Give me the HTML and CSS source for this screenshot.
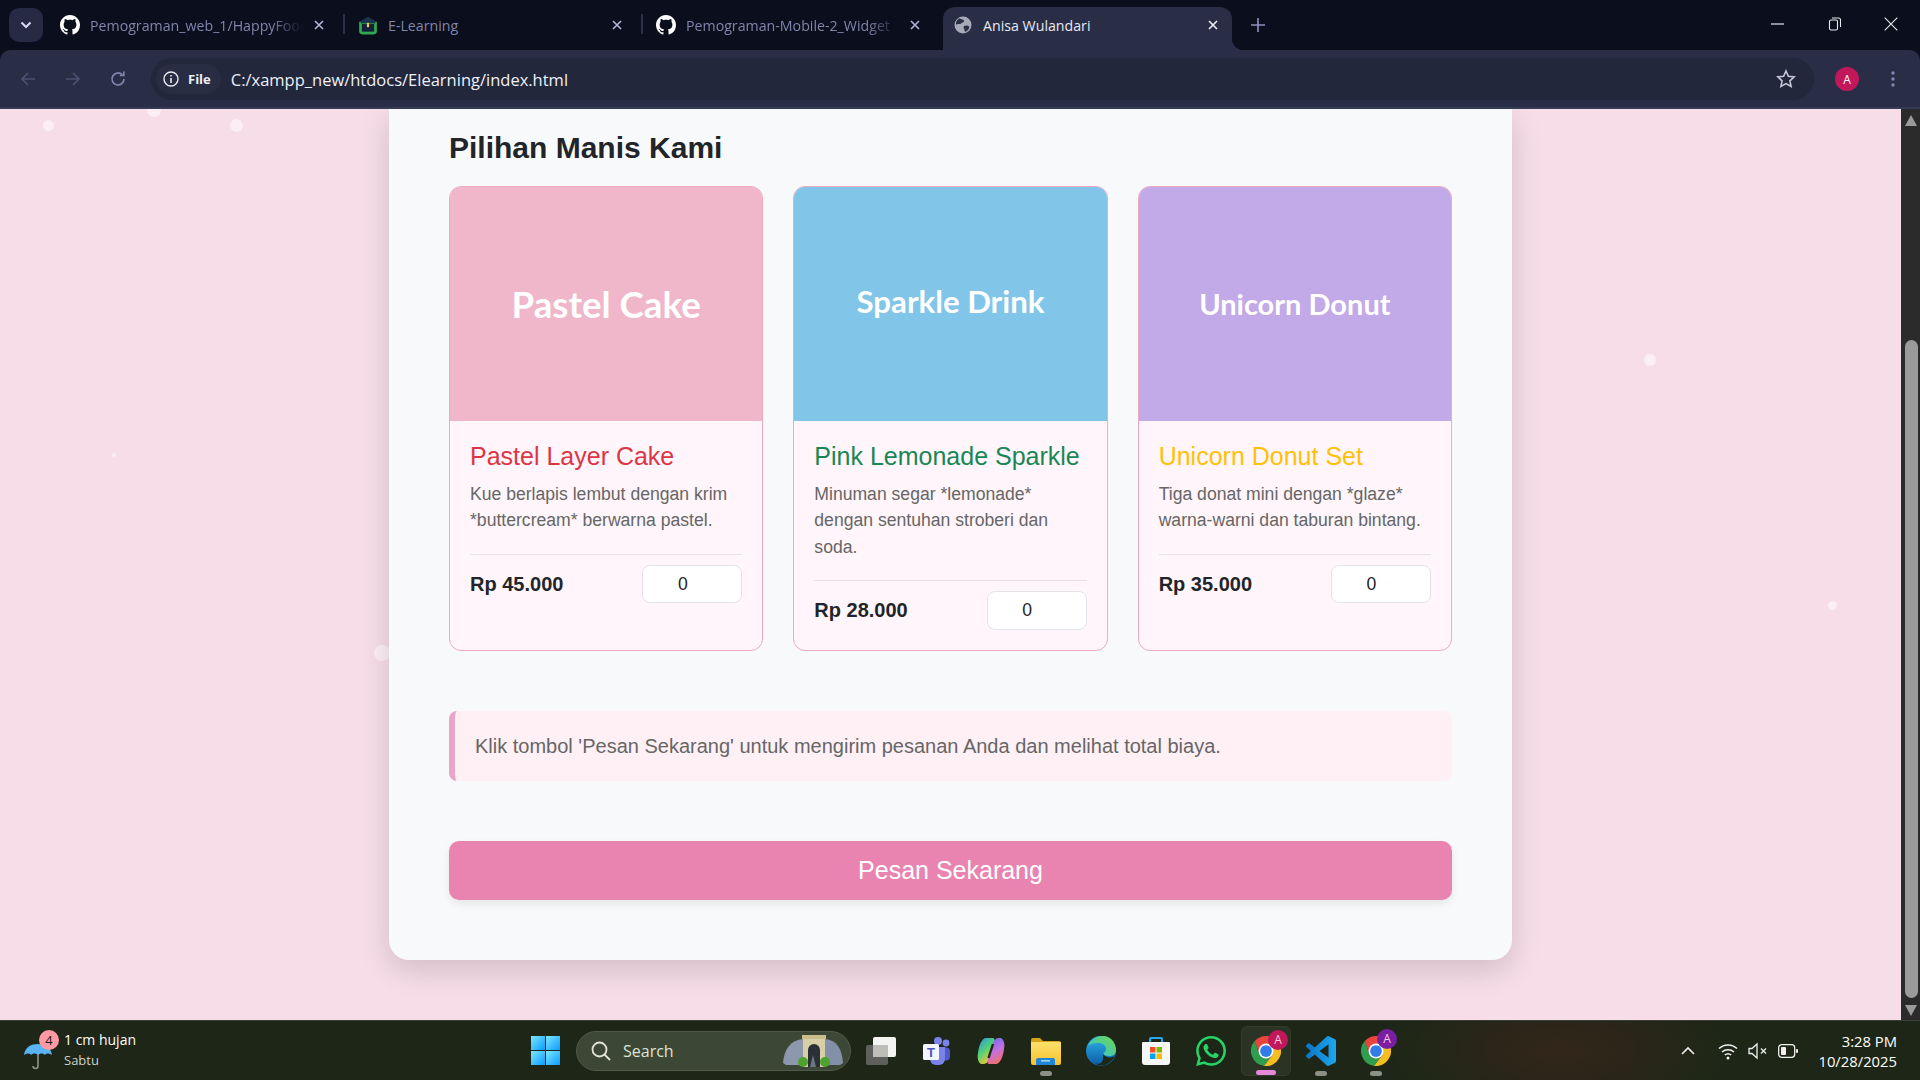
FILE: index.html
```html
<!DOCTYPE html>
<html lang="id">
<head>
<meta charset="utf-8">
<title>Anisa Wulandari</title>
<link rel="stylesheet" href="styles.css">
</head>
<body>
<svg class="defs" width="0" height="0" aria-hidden="true">
  <defs>
    <symbol id="gh" viewBox="0 0 16 16"><path fill="currentColor" d="M8 0C3.58 0 0 3.58 0 8c0 3.54 2.29 6.53 5.47 7.59.4.07.55-.17.55-.38 0-.19-.01-.82-.01-1.49-2.01.37-2.53-.49-2.69-.94-.09-.23-.48-.94-.82-1.13-.28-.15-.68-.52-.01-.53.63-.01 1.08.58 1.23.82.72 1.21 1.87.87 2.33.66.07-.52.28-.87.51-1.07-1.78-.2-3.64-.89-3.64-3.95 0-.87.31-1.59.82-2.15-.08-.2-.36-1.02.08-2.12 0 0 .67-.21 2.2.82.64-.18 1.32-.27 2-.27.68 0 1.36.09 2 .27 1.53-1.04 2.2-.82 2.2-.82.44 1.1.16 1.92.08 2.12.51.56.82 1.27.82 2.15 0 3.07-1.87 3.75-3.65 3.95.29.25.54.73.54 1.48 0 1.07-.01 1.93-.01 2.2 0 .21.15.46.55.38A8.013 8.013 0 0016 8c0-4.42-3.58-8-8-8z"/></symbol>
    <symbol id="x" viewBox="0 0 12 12"><path d="M2 2l8 8M10 2l-8 8" stroke="currentColor" stroke-width="1.6" fill="none"/></symbol>
    <symbol id="chrome" viewBox="0 0 24 24">
      <path fill="#e8453c" d="M12 6h10.39A12 12 0 0 0 3 4.06L6.8 15Z"/>
      <path fill="#2f9e4f" d="M6.8 15 3 4.06A12 12 0 0 0 10.4 23.9L17.2 15Z"/>
      <path fill="#f5bd1f" d="M17.2 15 10.4 23.9A12 12 0 0 0 22.39 6H12Z"/>
      <circle cx="12" cy="12" r="6" fill="#fff"/><circle cx="12" cy="12" r="4.7" fill="#2f7de8"/>
    </symbol>
    <linearGradient id="win" x1="0" y1="0" x2="1" y2="1"><stop offset="0" stop-color="#7ce8ff"/><stop offset="1" stop-color="#0a9bff"/></linearGradient>
    <linearGradient id="edgeA" x1="0" y1="0" x2="0" y2="1"><stop offset="0" stop-color="#2bb4e8"/><stop offset="1" stop-color="#0c5aa6"/></linearGradient>
    <linearGradient id="edgeB" x1="0" y1="1" x2="1" y2="0"><stop offset="0" stop-color="#34bfe0"/><stop offset="1" stop-color="#6fd84f"/></linearGradient>
    <linearGradient id="copA" x1="0" y1="0" x2="0.6" y2="1"><stop offset="0" stop-color="#2f8df0"/><stop offset=".5" stop-color="#4fd07a"/><stop offset="1" stop-color="#f7c92c"/></linearGradient>
    <linearGradient id="copB" x1="0.3" y1="0" x2="0.7" y2="1"><stop offset="0" stop-color="#6a6ef0"/><stop offset=".5" stop-color="#c66fe0"/><stop offset="1" stop-color="#f6705a"/></linearGradient>
    <linearGradient id="folder" x1="0" y1="0" x2="0" y2="1"><stop offset="0" stop-color="#ffe26b"/><stop offset="1" stop-color="#f5c12e"/></linearGradient>
    <linearGradient id="vs" x1="0" y1="0" x2="1" y2="0"><stop offset="0" stop-color="#0a76c4"/><stop offset="1" stop-color="#1ea6f0"/></linearGradient>
  </defs>
</svg>

<header class="tabstrip">
  <button class="tab-search"><svg width="12" height="8" viewBox="0 0 12 8"><path d="M1.5 1.5 6 6l4.5-4.5" stroke="#d8daf0" stroke-width="2" fill="none"/></svg></button>
  <div class="tab">
    <svg class="favicon fav-white"><use href="#gh"/></svg>
    <span class="tab-title fading">Pemograman_web_1/HappyFood</span>
    <svg class="tab-close"><use href="#x"/></svg>
  </div>
  <i class="tab-sep"></i>
  <div class="tab">
    <svg class="favicon" viewBox="1 1 18 18"><path d="M2 7h16v8.500a3 3 0 0 1-3 3H5a3 3 0 0 1-3-3Z" fill="#2fa84f"/><rect x="4.500" y="9" width="11" height="7" fill="#14213a"/><path d="M3.500 6.500 10 2.500l6.500 4v2h-13Z" fill="#1c3350"/><rect x="9" y="8" width="2" height="4" fill="#e8c64a"/></svg>
    <span class="tab-title">E-Learning</span>
    <svg class="tab-close"><use href="#x"/></svg>
  </div>
  <i class="tab-sep"></i>
  <div class="tab">
    <svg class="favicon fav-white"><use href="#gh"/></svg>
    <span class="tab-title fading">Pemograman-Mobile-2_Widget</span>
    <svg class="tab-close"><use href="#x"/></svg>
  </div>
  <div class="tab tab-active">
    <svg class="favicon" viewBox="0 0 20 20"><circle cx="10" cy="10" r="8.5" fill="#a6a9b8"/><path d="M6 3.500c2 .5 4 .5 5 2s-2 2-3 3-3 0-4 1-2-3 2-6ZM11 11c2-1 4-.5 5 .5s-1 4-3 5-1-2-2-3 0-2 0-2.500Z" fill="#2a2e45"/></svg>
    <span class="tab-title">Anisa Wulandari</span>
    <svg class="tab-close"><use href="#x"/></svg>
  </div>
  <svg class="new-tab" width="14" height="14" viewBox="0 0 14 14"><path d="M7 0v14M0 7h14" stroke="#8d93bd" stroke-width="1.6"/></svg>
  <div class="win-controls">
    <svg width="14" height="14" viewBox="0 0 14 14"><path d="M0 7h13" stroke="#e8e8ee" stroke-width="1.2"/></svg>
    <svg width="14" height="14" viewBox="0 0 14 14"><rect x="1.500" y="3" width="8" height="10" rx="1.500" stroke="#e8e8ee" stroke-width="1.1" fill="none"/><path d="M4 1h6.500a2 2 0 0 1 2 2v7" stroke="#e8e8ee" stroke-width="1.1" fill="none"/></svg>
    <svg width="14" height="14" viewBox="0 0 14 14"><path d="M.7.7l12.600 12.600M13.300.7.7 13.300" stroke="#e8e8ee" stroke-width="1.1"/></svg>
  </div>
</header>

<nav class="toolbar">
  <div class="nav-btns">
    <svg width="18" height="18" viewBox="0 0 18 18"><path d="M16 9H3M9 3 3 9l6 6" stroke="#4c5272" stroke-width="1.6" fill="none"/></svg>
    <svg width="18" height="18" viewBox="0 0 18 18"><path d="M2 9h13M9 3l6 6-6 6" stroke="#4c5272" stroke-width="1.6" fill="none"/></svg>
    <svg width="18" height="18" viewBox="0 0 18 18"><path d="M15 9a6 6 0 1 1-1.800-4.300M14.800 1.500v4h-4" stroke="#7f86ad" stroke-width="1.7" fill="none"/></svg>
  </div>
  <div class="omnibox">
    <div class="chip">
      <svg width="16" height="16" viewBox="0 0 16 16"><circle cx="8" cy="8" r="7" stroke="#e8e9f2" stroke-width="1.4" fill="none"/><path d="M8 7v5M8 4v1.600" stroke="#e8e9f2" stroke-width="1.6"/></svg>
      <span>File</span>
    </div>
    <span class="url">C:/xampp_new/htdocs/Elearning/index.html</span>
    <svg class="star" width="20" height="20" viewBox="0 0 20 20"><path d="M10 2l2.400 5.300 5.800.6-4.300 3.900 1.200 5.700L10 14.600l-5.100 2.900 1.200-5.700L1.800 7.900l5.800-.6Z" stroke="#c4c7d6" stroke-width="1.6" fill="none"/></svg>
  </div>
  <span class="avatar">A</span>
  <svg class="menu" width="4" height="18" viewBox="0 0 4 18"><circle cx="2" cy="3" r="1.7" fill="#8087b0"/><circle cx="2" cy="9" r="1.7" fill="#8087b0"/><circle cx="2" cy="15" r="1.7" fill="#8087b0"/></svg>
</nav>

<div class="browser-body">
  <div class="viewport">
    <i class="dot d1"></i><i class="dot d2"></i><i class="dot d3"></i><i class="dot d4"></i><i class="dot d5"></i><i class="dot d6"></i><i class="dot d7"></i>
    <main class="sheet">
      <h2 class="section-title">Pilihan Manis Kami</h2>
      <section class="products">
        <article class="product">
          <div class="thumb thumb-pink">Pastel Cake</div>
          <div class="product-body">
            <h3 class="name name-red">Pastel Layer Cake</h3>
            <p class="desc">Kue berlapis lembut dengan krim *buttercream* berwarna pastel.</p>
            <div class="buy"><strong class="price">Rp 45.000</strong><input class="qty" type="number" value="0"></div>
          </div>
        </article>
        <article class="product">
          <div class="thumb thumb-blue">Sparkle Drink</div>
          <div class="product-body">
            <h3 class="name name-green">Pink Lemonade Sparkle</h3>
            <p class="desc">Minuman segar *lemonade* dengan sentuhan stroberi dan soda.</p>
            <div class="buy"><strong class="price">Rp 28.000</strong><input class="qty" type="number" value="0"></div>
          </div>
        </article>
        <article class="product">
          <div class="thumb thumb-purple">Unicorn Donut</div>
          <div class="product-body">
            <h3 class="name name-yellow">Unicorn Donut Set</h3>
            <p class="desc">Tiga donat mini dengan *glaze* warna-warni dan taburan bintang.</p>
            <div class="buy"><strong class="price">Rp 35.000</strong><input class="qty" type="number" value="0"></div>
          </div>
        </article>
      </section>
      <p class="note">Klik tombol 'Pesan Sekarang' untuk mengirim pesanan Anda dan melihat total biaya.</p>
      <button class="order">Pesan Sekarang</button>
    </main>
  </div>
  <aside class="scrollbar">
    <i class="arrow arrow-up"></i>
    <div class="scroll-track"><div class="scroll-thumb"></div></div>
    <i class="arrow arrow-down"></i>
  </aside>
</div>

<footer class="taskbar">
  <div class="weather">
    <svg class="umbrella" width="30" height="34" viewBox="0 0 30 34"><path d="M15 13v15a2.500 2.500 0 0 1-5 0" stroke="#8f9488" stroke-width="1.6" fill="none"/><path d="M1 17C2 9 8 6 15 6s13 3 14 11c-3-2-6-2-7 0-2-2-5-2-7 0-2-2-5-2-7 0-1-2-4-2-7 0Z" fill="#58b4f2"/></svg>
    <span class="badge">4</span>
    <div class="weather-text"><span class="w-main">1 cm hujan</span><span class="w-sub">Sabtu</span></div>
  </div>
  <div class="tb-btn">
    <svg width="29" height="29" viewBox="0 0 29 29"><rect width="14" height="14" fill="url(#win)"/><rect x="15" width="14" height="14" fill="url(#win)"/><rect y="15" width="14" height="14" fill="url(#win)"/><rect x="15" y="15" width="14" height="14" fill="url(#win)"/></svg>
  </div>
  <div class="searchbox">
    <svg width="20" height="20" viewBox="0 0 20 20"><circle cx="8.500" cy="8.500" r="7" stroke="#e2e4da" stroke-width="1.8" fill="none"/><path d="M13.500 13.500 19 19" stroke="#e2e4da" stroke-width="1.8"/></svg>
    <span>Search</span>
    <svg class="search-art" width="60" height="32" viewBox="0 0 60 32"><path d="M0 28C1 14 8 5 20 4l4 26H3Z" fill="#8d97ad"/><path d="M60 28C59 14 54 5 42 4l-5 26h20Z" fill="#8490a8"/><rect x="20" y="0" width="22" height="32" fill="#d8cfa6"/><rect x="19" y="0" width="24" height="4" fill="#c9bd8c"/><path d="M25 32V15a6 6 0 0 1 12 0v17Z" fill="#2b3036"/><path d="M27 32l3-12 3 12Z" fill="#6d7485"/><circle cx="20" cy="27" r="5" fill="#4ea32e"/><circle cx="42" cy="27" r="5" fill="#4ea32e"/></svg>
  </div>
  <div class="tb-btn">
    <svg width="30" height="28" viewBox="0 0 30 28"><rect y="8" width="22" height="20" rx="2" fill="#5f5f5c"/><rect x="7" width="23" height="20" rx="2" fill="#f4f4f2"/><rect x="7" y="8" width="15" height="12" fill="#bdbdb9"/></svg>
  </div>
  <div class="tb-btn">
    <svg width="30" height="30" viewBox="0 0 30 30"><circle cx="25" cy="7" r="3.400" fill="#7b83eb"/><circle cx="17" cy="5" r="4" fill="#7b83eb"/><rect x="20" y="11.500" width="9" height="13" rx="4" fill="#5059c9"/><path d="M9 11h15v12a6 6 0 0 1-6 6h-3a6 6 0 0 1-6-6Z" fill="#7b83eb"/><rect x="2" y="8" width="16" height="16" rx="1.500" fill="#f3f5ff"/><text class="teams-t" x="10" y="21" text-anchor="middle">T</text></svg>
  </div>
  <div class="tb-btn">
    <svg width="30" height="30" viewBox="0 0 30 30"><path d="M10 2h6c3 0 3 2 2 5l-5 16c-1 3-3 5-6 5H5c-3-2-4-6-3-11C3 9 6 2 10 2Z" fill="url(#copA)"/><path d="M20 28h-6c-3 0-3-2-2-5l5-16c1-3 3-5 6-5h2c3 2 4 6 3 11-1 8-4 15-8 15Z" fill="url(#copB)"/><path d="M12.500 22 17 8" stroke="#1f2817" stroke-width="2.400"/></svg>
  </div>
  <div class="tb-btn has-dot">
    <svg width="30" height="28" viewBox="0 0 30 28"><path d="M0 3a2 2 0 0 1 2-2h7l3 3h16a2 2 0 0 1 2 2v3H0Z" fill="#d9a21b"/><path d="M0 5h30v21a2 2 0 0 1-2 2H2a2 2 0 0 1-2-2Z" fill="url(#folder)"/><path d="M5 28v-5a2 2 0 0 1 2-2h15a2 2 0 0 1 2 2v5Z" fill="#1f86d6"/><rect x="10" y="23" width="9" height="1.600" fill="#9ad4f7"/></svg>
  </div>
  <div class="tb-btn">
    <svg width="30" height="30" viewBox="0 0 30 30"><circle cx="15" cy="15" r="15" fill="url(#edgeA)"/><path d="M2 10C5 3 12 0 17 0c7 0 13 6 13 14 0 4-3 6-7 6-3 0-6-1-6-3 2-1 3-2 3-4 0-4-4-6-8-6-4 0-8 1-10 3Z" fill="url(#edgeB)"/><path d="M17 17c0 2 3 4.500 7 4.500 2 0 4-1 5-2.500-2 6-8 10.500-14 10.500-2 0-4-1-5-2 4 1 7-1 7-5Z" fill="#1f2817"/></svg>
  </div>
  <div class="tb-btn">
    <svg width="30" height="30" viewBox="0 0 30 30"><path d="M9 7V3a1 1 0 0 1 1-1h10a1 1 0 0 1 1 1v4" stroke="#25a9f0" stroke-width="2" fill="none"/><path d="M1 7a1 1 0 0 1 1-1h26a1 1 0 0 1 1 1v19a3 3 0 0 1-3 3H4a3 3 0 0 1-3-3Z" fill="#f7f7f7"/><rect x="9" y="11" width="5.500" height="5.500" fill="#f25022"/><rect x="15.500" y="11" width="5.500" height="5.500" fill="#7fba00"/><rect x="9" y="17.500" width="5.500" height="5.500" fill="#00a4ef"/><rect x="15.500" y="17.500" width="5.500" height="5.500" fill="#ffb900"/></svg>
  </div>
  <div class="tb-btn">
    <svg width="30" height="30" viewBox="0 0 24 24"><path fill="#25d366" d="M17.472 14.382c-.297-.149-1.758-.867-2.03-.967-.273-.099-.471-.148-.67.15-.197.297-.767.966-.94 1.164-.173.199-.347.223-.644.075-.297-.15-1.255-.463-2.39-1.475-.883-.788-1.48-1.761-1.653-2.059-.173-.297-.018-.458.13-.606.134-.133.298-.347.446-.52.149-.174.198-.298.298-.497.099-.198.05-.371-.025-.52-.075-.149-.669-1.612-.916-2.207-.242-.579-.487-.5-.669-.51-.173-.008-.371-.01-.57-.01-.198 0-.52.074-.792.372-.272.297-1.04 1.016-1.04 2.479 0 1.462 1.065 2.875 1.213 3.074.149.198 2.096 3.2 5.077 4.487.709.306 1.262.489 1.694.625.712.227 1.36.195 1.871.118.571-.085 1.758-.719 2.006-1.413.248-.694.248-1.289.173-1.413-.074-.124-.272-.198-.57-.347m-5.421 7.403h-.004a9.87 9.87 0 01-5.031-1.378l-.361-.214-3.741.982.998-3.648-.235-.374a9.86 9.86 0 01-1.51-5.26c.001-5.45 4.436-9.884 9.888-9.884 2.64 0 5.122 1.03 6.988 2.898a9.825 9.825 0 012.893 6.994c-.003 5.45-4.437 9.884-9.885 9.884m8.413-18.297A11.815 11.815 0 0012.05 0C5.495 0 .16 5.335.157 11.892c0 2.096.547 4.142 1.588 5.945L.057 24l6.305-1.654a11.882 11.882 0 005.683 1.448h.005c6.554 0 11.89-5.335 11.893-11.893a11.821 11.821 0 00-3.48-8.413Z"/></svg>
  </div>
  <div class="tb-btn tb-active">
    <svg class="tb-chrome" width="30" height="30"><use href="#chrome"/></svg>
    <span class="profile-badge pb-red">A</span>
  </div>
  <div class="tb-btn has-dot">
    <svg width="30" height="30" viewBox="0 0 24 24"><path fill="url(#vs)" d="M23.15 2.587L18.21.21a1.494 1.494 0 0 0-1.705.29l-9.46 8.63-4.12-3.128a.999.999 0 0 0-1.276.057L.327 7.261A1 1 0 0 0 .326 8.74L3.899 12 .326 15.26a1 1 0 0 0 .001 1.479L1.65 17.94a.999.999 0 0 0 1.276.057l4.12-3.128 9.46 8.63a1.492 1.492 0 0 0 1.704.29l4.942-2.377A1.5 1.5 0 0 0 24 20.06V3.939a1.5 1.5 0 0 0-.85-1.352zm-5.146 14.861L10.826 12l7.178-5.448v10.896z"/></svg>
  </div>
  <div class="tb-btn has-dot">
    <svg class="tb-chrome" width="30" height="30"><use href="#chrome"/></svg>
    <span class="profile-badge pb-purple">A</span>
  </div>
  <div class="tray">
    <svg width="14" height="9" viewBox="0 0 14 9"><path d="M1 8l6-6 6 6" stroke="#f0f0f0" stroke-width="1.600" fill="none"/></svg>
    <svg class="wifi" width="20" height="18" viewBox="0 0 20 18"><path d="M1 6.500a13 13 0 0 1 18 0M4 10a9 9 0 0 1 12 0M6.800 13a5 5 0 0 1 6.400 0" stroke="#f0f0f0" stroke-width="1.500" fill="none"/><circle cx="10" cy="16" r="1.500" fill="#f0f0f0"/></svg>
    <svg class="speaker" width="20" height="18" viewBox="0 0 20 18"><path d="M1 6.500h3L9 2v14l-5-4.500H1Z" stroke="#f0f0f0" stroke-width="1.300" fill="none"/><path d="M13 6.500l5 5M18 6.500l-5 5" stroke="#f0f0f0" stroke-width="1.300"/></svg>
    <svg class="battery" width="20" height="14" viewBox="0 0 20 14"><rect x=".7" y=".7" width="16" height="12.600" rx="3" stroke="#f0f0f0" stroke-width="1.300" fill="none"/><rect x="3" y="3" width="5" height="8" rx="1" fill="#f0f0f0"/><rect x="18" y="5" width="2" height="4" rx="1" fill="#f0f0f0"/></svg>
    <div class="clock"><span>3:28 PM</span><span>10/28/2025</span></div>
  </div>
</footer>
</body>
</html>
```
FILE: styles.css
```css
* { box-sizing: border-box; }
html, body { margin: 0; height: 100%; }
body {
  display: flex;
  flex-direction: column;
  height: 100vh;
  overflow: hidden;
  font-family: "Liberation Sans", Arial, sans-serif;
  background: #0b0e1c;
}
.defs { position: absolute; }

/* tab strip */
.tabstrip {
  flex: 0 0 50px;
  display: flex;
  align-items: flex-end;
  padding-left: 9px;
  background: #0b0e1c;
  font-family: "Open Sans", "Noto Sans", sans-serif;
  font-size: 14.2px;
}
.tab-search {
  align-self: flex-start;
  width: 34px;
  height: 34px;
  margin: 8px 4px 0 0;
  padding: 0;
  border: 0;
  border-radius: 10px;
  background: #262a42;
  display: flex;
  align-items: center;
  justify-content: center;
}
.tab {
  width: 296px;
  height: 43px;
  display: flex;
  align-items: center;
  padding: 0 17px 7px 13px;
  color: #7f85ab;
}
.favicon { width: 20px; height: 20px; flex: none; margin-right: 10px; }
.fav-white { color: #fff; }
.tab-title { flex: 1; overflow: hidden; white-space: nowrap; }
.fading {
  -webkit-mask-image: linear-gradient(to right, #000 85%, transparent 100%);
  mask-image: linear-gradient(to right, #000 85%, transparent 100%);
}
.tab-close { width: 12px; height: 12px; flex: none; margin-left: 10px; margin-right: 1px; color: #b3b7d6; }
.tab-sep { width: 2px; height: 20px; margin-bottom: 16px; background: #2b2f47; flex: none; }
.tab-active {
  position: relative;
  width: 289px;
  margin-left: 4px;
  padding-left: 10px;
  padding-right: 12px;
  background: #292e46;
  border-radius: 12px 12px 0 0;
  color: #e6e8f2;
}
.tab-active .tab-close { color: #f0f1f8; }
.tab-active::after {
  content: "";
  position: absolute;
  right: -12px;
  bottom: 0;
  width: 12px;
  height: 12px;
  background: radial-gradient(circle at 100% 0, transparent 12px, #292e46 12.5px);
}
.new-tab { align-self: center; margin-left: 19px; }
.win-controls {
  margin-left: auto;
  align-self: flex-start;
  display: flex;
  gap: 42.5px;
  padding: 17px 22px 0 0;
}

/* toolbar */
.toolbar {
  flex: 0 0 59px;
  display: flex;
  align-items: center;
  padding: 8px 18px 7px 19px;
  background: #292e46;
  border-bottom: 2px solid #343a58;
  border-radius: 10px 10px 0 0;
  font-family: "Open Sans", "Noto Sans", sans-serif;
}
.nav-btns { display: flex; gap: 27px; width: 132px; flex: none; }
.omnibox {
  flex: 0 0 1663px;
  height: 42px;
  display: flex;
  align-items: center;
  padding: 0 18px 0 5px;
  background: #22273b;
  border-radius: 21px;
}
.chip {
  display: flex;
  align-items: center;
  gap: 9px;
  height: 30px;
  padding: 0 10px 0 7px;
  border-radius: 15px;
  background: #282d43;
  color: #eceef6;
  font-size: 13px;
  font-weight: 700;
}
.url { margin-left: 10px; color: #eef0f8; font-size: 16.5px; }
.star { margin-left: auto; }
.avatar {
  width: 24px;
  height: 24px;
  margin-left: 21px;
  border-radius: 50%;
  background: #c2185b;
  color: #fff;
  font-size: 12px;
  display: flex;
  align-items: center;
  justify-content: center;
  flex: none;
}
.menu { margin-left: 32px; flex: none; }

/* browser body */
.browser-body { flex: 1; display: flex; min-height: 0; }
.viewport {
  position: relative;
  flex: 1;
  display: flex;
  justify-content: center;
  align-items: flex-start;
  overflow: hidden;
  background: #f6dde8;
}
.dot { position: absolute; border-radius: 50%; background: rgba(255, 255, 255, .5); }
.d1 { left: 43px; top: 11px; width: 11px; height: 11px; }
.d2 { left: 230px; top: 10px; width: 13px; height: 13px; }
.d3 { left: 147px; top: -6px; width: 14px; height: 14px; }
.d4 { left: 112px; top: 344px; width: 4px; height: 4px; }
.d5 { left: 1644px; top: 245px; width: 12px; height: 12px; }
.d6 { left: 1828px; top: 492px; width: 9px; height: 9px; }
.d7 { left: 374px; top: 536px; width: 16px; height: 16px; }

.sheet {
  position: relative;
  width: 1123px;
  padding: 22px 60px 60px;
  background: #f8f9fa;
  border-radius: 0 0 20px 20px;
  box-shadow: 0 10px 30px rgba(0, 0, 0, .15);
}
.section-title {
  margin: 0 0 22px;
  font-size: 30px;
  line-height: 33px;
  font-weight: 700;
  color: #212529;
}
.products { display: grid; grid-template-columns: repeat(3, 1fr); gap: 30px; }
.product {
  display: flex;
  flex-direction: column;
  background: #fff5fa;
  border: 1px solid #eea9c3;
  border-radius: 12px;
  overflow: hidden;
}
.thumb {
  height: 234px;
  display: flex;
  align-items: center;
  justify-content: center;
  color: #fff;
  font-family: Lato, sans-serif;
  font-weight: 700;
}
.thumb-pink { background: #f0b6ca; font-size: 36.7px; }
.thumb-blue { background: #81c5e9; font-size: 31.2px; padding-bottom: 6px; }
.thumb-purple { background: #c2a9e8; font-size: 29px; padding-bottom: 2px; }
.product-body { padding: 21px 20px 20px; }
.name { margin: 0 0 10px; font-size: 25px; line-height: 29px; font-weight: 400; }
.name-red { color: #dc3545; }
.name-green { color: #198754; }
.name-yellow { color: #ffc107; }
.desc { margin: 0 0 20px; font-size: 17.6px; line-height: 26.4px; color: #666; }
.buy {
  display: flex;
  justify-content: space-between;
  align-items: center;
  padding-top: 10px;
  border-top: 1px solid #e2e4ea;
}
.price { font-size: 20px; color: #212529; }
.qty {
  width: 100px;
  height: 38.5px;
  padding: 0 4px 0 0;
  border: 1px solid #e2e4ea;
  border-radius: 8px;
  background: #fff;
  color: #212529;
  font-family: inherit;
  font-size: 17.6px;
  text-align: center;
}
.note {
  margin: 60px 0;
  padding: 20px;
  border-left: 6px solid #e8a5c5;
  border-radius: 8px;
  background: #fff0f5;
  color: #666;
  font-size: 20px;
  line-height: 30px;
}
.order {
  display: block;
  width: 100%;
  height: 59px;
  padding: 0;
  border: 0;
  border-radius: 10px;
  background: #e983b0;
  color: #fff;
  font-family: inherit;
  font-size: 25px;
  box-shadow: 0 4px 8px rgba(0, 0, 0, .08);
}

/* scrollbar */
.scrollbar {
  flex: 0 0 19px;
  display: flex;
  flex-direction: column;
  align-items: center;
  background: #2b2b2b;
}
.arrow { flex: none; width: 0; height: 0; border-left: 6.5px solid transparent; border-right: 6.5px solid transparent; }
.arrow-up { margin-top: 6px; border-bottom: 11px solid #9b9b9b; }
.arrow-down { margin: 4px 0 4px; border-top: 11px solid #9b9b9b; }
.scroll-track { flex: 1; width: 100%; padding: 214px 2px 0 4px; }
.scroll-thumb { height: 658px; background: #9b9b9b; border-radius: 7px; }

/* taskbar */
.taskbar {
  flex: 0 0 60px;
  display: flex;
  align-items: center;
  background: radial-gradient(ellipse 170px 70px at 1560px 50%, #33251a, transparent), #1e2717;
  border-top: 1px solid #3c4136;
  font-family: "Open Sans", "Noto Sans", sans-serif;
  color: #fff;
}
.weather {
  position: relative;
  flex: 0 0 520px;
  display: flex;
  align-items: center;
  height: 100%;
  padding-left: 23px;
}
.umbrella { flex: none; margin-top: 8px; }
.badge {
  position: absolute;
  left: 39px;
  top: 9px;
  width: 20px;
  height: 20px;
  border-radius: 50%;
  background: #ff9aa5;
  color: #1a1a1a;
  font-size: 13px;
  display: flex;
  align-items: center;
  justify-content: center;
}
.weather-text { display: flex; flex-direction: column; margin: -2px 0 0 11px; }
.w-main { font-size: 14px; line-height: 20px; }
.w-sub { font-size: 13px; line-height: 20px; color: #cfd2c8; }
.tb-btn {
  position: relative;
  flex: 0 0 50px;
  height: 50px;
  margin-right: 5px;
  display: flex;
  align-items: center;
  justify-content: center;
  border-radius: 6px;
}
.tb-active { background: #2b3324; border: 1px solid #333b2c; }
.tb-active::after,
.has-dot::after {
  content: "";
  position: absolute;
  left: 50%;
  bottom: 0;
  width: 12px;
  height: 5px;
  margin-left: -6px;
  border-radius: 3px;
  background: #8c9086;
}
.tb-active::after { width: 20px; margin-left: -10px; background: #e58ad9; }
.searchbox {
  flex: 0 0 275px;
  height: 40px;
  margin: 0 5px 0 1px;
  display: flex;
  align-items: center;
  gap: 12px;
  padding: 0 7px 0 14px;
  border: 1px solid #50594a;
  border-radius: 20px;
  background: #3c4735;
  color: #dfe2d8;
  font-size: 16px;
}
.search-art { margin-left: auto; }
.teams-t { fill: #4a54c4; font: 700 13px "Liberation Sans", sans-serif; }
.profile-badge {
  position: absolute;
  left: 26px;
  top: 3px;
  width: 20px;
  height: 20px;
  border-radius: 50%;
  color: #f3c9d8;
  font-size: 12px;
  display: flex;
  align-items: center;
  justify-content: center;
}
.pb-red { background: #c2185b; }
.pb-purple { background: #7b1fa2; }
.tray {
  flex: 1;
  display: flex;
  align-items: center;
  justify-content: flex-end;
  padding-right: 23px;
}
.wifi { margin-left: 23px; }
.speaker { margin-left: 10px; }
.battery { margin-left: 10px; }
.clock {
  display: flex;
  flex-direction: column;
  align-items: flex-end;
  margin-left: 20px;
  font-size: 14.8px;
  line-height: 20px;
}
```
